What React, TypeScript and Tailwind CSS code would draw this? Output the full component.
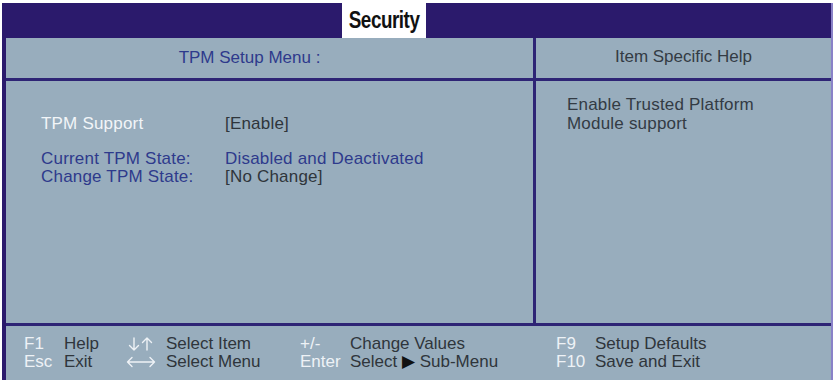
import React from "react";

const F = { fontFamily: '"Liberation Sans", Arial, sans-serif' };

function UpDown() {
  return (
    <svg width="26" height="16" viewBox="0 0 26 16" fill="none" stroke="#eef2f6" strokeWidth="1.4" strokeLinecap="round" strokeLinejoin="round">
      <path d="M6 2 V14 M1.5 9.5 L6 14 L10.5 9.5" />
      <path d="M19 14 V2 M14.5 6.5 L19 2 L23.5 6.5" />
    </svg>
  );
}

function LeftRight() {
  return (
    <svg width="30" height="16" viewBox="0 0 30 16" fill="none" stroke="#eef2f6" strokeWidth="1.4" strokeLinecap="round" strokeLinejoin="round">
      <path d="M1.5 8 H28.5 M6 3.5 L1.5 8 L6 12.5 M24 3.5 L28.5 8 L24 12.5" />
    </svg>
  );
}

export default function App() {
  return (
    <div className="w-[835px] h-[382px] bg-white pt-[3px] pl-[2px] overflow-hidden" style={F}>
      <div className="w-[831px] h-[377px] flex flex-col border-l-[4px] border-r-[2px] border-l-[#2b1a6c] border-r-[#8a82c8] bg-[#98adbd]">
        {/* top bar */}
        <div className="h-[35px] bg-[#2b1a6c] flex items-stretch pl-[336px]">
          <div className="w-[84px] bg-white flex items-center justify-center">
            <span className="inline-block text-[23px] font-bold text-[#111] scale-x-[0.82] tracking-tight leading-none">Security</span>
          </div>
        </div>
        {/* header row */}
        <div className="h-[43px] flex border-b-[3px] border-b-[#2e2475]">
          <div className="w-[530px] flex items-center justify-center pr-[40px] border-r-[3px] border-r-[#2e2475]">
            <span className="text-[17px] text-[#2e3a8c]">TPM Setup Menu :</span>
          </div>
          <div className="flex-1 flex items-center justify-center pb-[2px]">
            <span className="text-[17px] text-[#333b44]">Item Specific Help</span>
          </div>
        </div>
        {/* content */}
        <div className="flex-1 flex border-b-[3px] border-b-[#2e2475]">
          <div className="w-[530px] border-r-[3px] border-r-[#2e2475] pl-[35px] pt-[34px] text-[17px] leading-[18px] tracking-[0.2px]">
            <div className="flex">
              <span className="w-[184px] text-[#f2f5f8]">TPM Support</span>
              <span className="text-[#2f353b]">[Enable]</span>
            </div>
            <div className="flex mt-[17px]">
              <span className="w-[184px] text-[#2e3a8c]">Current TPM State:</span>
              <span className="text-[#2e3a8c]">Disabled and Deactivated</span>
            </div>
            <div className="flex">
              <span className="w-[184px] text-[#2e3a8c]">Change TPM State:</span>
              <span className="text-[#2f353b]">[No Change]</span>
            </div>
          </div>
          <div className="flex-1 pl-[31px] pt-[14px] text-[17px] leading-[19px] tracking-[0.2px] text-[#333b44]">
            <div>Enable Trusted Platform</div>
            <div>Module support</div>
          </div>
        </div>
        {/* footer */}
        <div className="h-[54px] pl-[18px] pt-[9px] text-[17px] leading-[18px] flex">
          <div className="flex flex-col w-[40px] text-[#eef2f6]">
            <span>F1</span>
            <span>Esc</span>
          </div>
          <div className="flex flex-col w-[64px] text-[#2f353b]">
            <span>Help</span>
            <span>Exit</span>
          </div>
          <div className="flex flex-col w-[38px]">
            <span className="h-[18px] flex items-center"><UpDown /></span>
            <span className="h-[18px] flex items-center -ml-[2px]"><LeftRight /></span>
          </div>
          <div className="flex flex-col w-[134px] text-[#2f353b]">
            <span>Select Item</span>
            <span>Select Menu</span>
          </div>
          <div className="flex flex-col w-[50px] text-[#eef2f6]">
            <span>+/-</span>
            <span>Enter</span>
          </div>
          <div className="flex flex-col w-[206px] text-[#2f353b]">
            <span>Change Values</span>
            <span>Select <span className="text-[#111]">▶</span> Sub-Menu</span>
          </div>
          <div className="flex flex-col w-[39px] text-[#eef2f6]">
            <span>F9</span>
            <span>F10</span>
          </div>
          <div className="flex flex-col text-[#2f353b]">
            <span>Setup Defaults</span>
            <span>Save and Exit</span>
          </div>
        </div>
      </div>
    </div>
  );
}
